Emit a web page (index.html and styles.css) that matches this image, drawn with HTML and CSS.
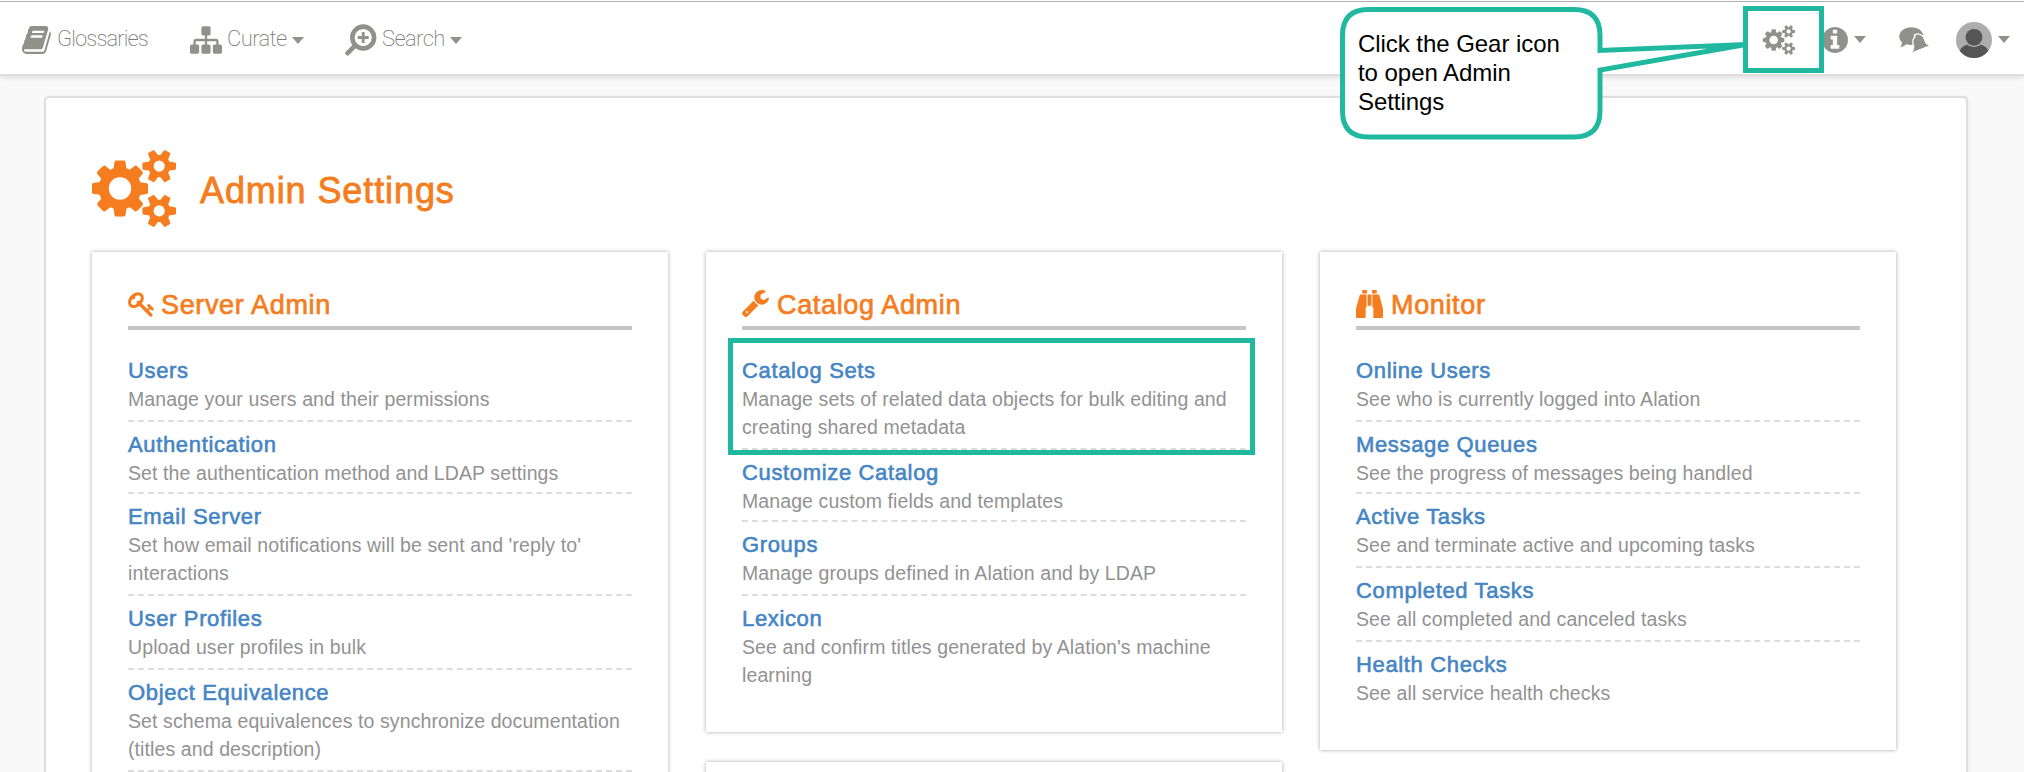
FILE: index.html
```html
<!DOCTYPE html>
<html lang="en">
<head>
<meta charset="utf-8">
<title>Admin Settings</title>
<link rel="stylesheet" href="styles.css">
</head>
<body>
<svg class="defs" width="0" height="0">
  <symbol id="cogs" viewBox="0 0 1920 1792"><path d="M896 896q0-106-75-181t-181-75-181 75-75 181 75 181 181 75 181-75 75-181zm768 512q0-52-38-90t-90-38-90 38-38 90q0 53 37.5 90.5t90.5 37.5 90.5-37.5 37.5-90.5zm0-1024q0-52-38-90t-90-38-90 38-38 90q0 53 37.5 90.5t90.5 37.5 90.5-37.5 37.5-90.5zm-384 421v185q0 10-7 19.5t-16 10.5l-155 24q-11 35-32 76 34 48 90 115 7 11 7 20 0 12-7 19-23 30-82.5 89.5t-78.5 59.5q-11 0-21-7l-115-90q-37 19-77 31-11 108-23 155-7 24-30 24h-186q-11 0-20-7.5t-10-17.5l-23-153q-34-10-75-31l-118 89q-7 7-20 7-11 0-21-8-144-133-144-160 0-9 7-19 10-14 41-53t47-61q-23-44-35-82l-152-24q-10-1-17-9.5t-7-19.5v-185q0-10 7-19.5t16-10.5l155-24q11-35 32-76-34-48-90-115-7-11-7-20 0-12 7-20 22-30 82-89t79-59q11 0 21 7l115 90q34-18 77-32 11-108 23-154 7-24 30-24h186q11 0 20 7.5t10 17.5l23 153q34 10 75 31l118-89q8-7 20-7 11 0 21 8 144 133 144 160 0 8-7 19-12 16-42 54t-45 60q23 48 34 82l152 23q10 2 17 10.5t7 19.5zm640 533v140q0 16-149 31-12 27-30 52 51 113 51 138 0 4-4 7-122 71-124 71-8 0-46-47t-52-68q-20 2-30 2t-30-2q-14 21-52 68t-46 47q-2 0-124-71-4-3-4-7 0-25 51-138-18-25-30-52-149-15-149-31v-140q0-16 149-31 13-29 30-52-51-113-51-138 0-4 4-7 4-2 35-20t59-34 30-16q8 0 46 46.5t52 67.5q20-2 30-2t30 2q51-71 92-112l6-2q4 0 124 70 4 3 4 7 0 25-51 138 17 23 30 52 149 15 149 31zm0-1024v140q0 16-149 31-12 27-30 52 51 113 51 138 0 4-4 7-122 71-124 71-8 0-46-47t-52-68q-20 2-30 2t-30-2q-14 21-52 68t-46 47q-2 0-124-71-4-3-4-7 0-25 51-138-18-25-30-52-149-15-149-31v-140q0-16 149-31 13-29 30-52-51-113-51-138 0-4 4-7 4-2 35-20t59-34 30-16q8 0 46 46.5t52 67.5q20-2 30-2t30 2q51-71 92-112l6-2q4 0 124 70 4 3 4 7 0 25-51 138 17 23 30 52 149 15 149 31z"/></symbol>
</svg>

<header class="topbar">
  <nav class="menu">
    <a class="menu-item glossaries">
      <svg class="ico-book" viewBox="0 128 1664 1536" preserveAspectRatio="none"><path d="M1639 478q40 57 18 129l-275 906q-19 64-76.5 107.5t-122.5 43.5h-923q-77 0-148.5-53.5t-99.5-131.5q-24-67-2-127 0-4 3-27t4-37q1-8-3-21.5t-3-19.5q2-11 8-21t16.5-23.5 16.5-23.5q23-38 45-91.5t30-91.5q3-10 .5-30t-.5-28q3-11 17-28t17-23q21-36 42-92t25-90q1-9-2.5-32t.5-28q4-13 22-30.5t22-22.5q19-26 42.5-84.5t27.5-96.5q1-8-3-25.5t-2-26.5q2-8 9-18t18-23 17-21q8-12 16.5-30.5t15-35 16-36 19.5-32 26.5-23.5 36-11.5 47.5 5.5l-1 3q38-9 51-9h761q74 0 114 56t18 130l-274 906q-36 119-71.5 153.5t-128.5 34.5h-869q-27 0-38 15-11 16-1 43 24 70 144 70h923q29 0 56-15.5t35-41.5l300-987q7-22 5-57 38 15 59 43zm-1064 2q-4 13 2 22.5t20 9.5h608q13 0 25.5-9.5t16.5-22.5l21-64q4-13-2-22.5t-20-9.5h-608q-13 0-25.5 9.5t-16.5 22.5zm-83 256q-4 13 2 22.5t20 9.5h608q13 0 25.5-9.5t16.5-22.5l21-64q4-13-2-22.5t-20-9.5h-608q-13 0-25.5 9.5t-16.5 22.5z"/></svg>
      <span>Glossaries</span>
    </a>
    <a class="menu-item curate">
      <svg class="ico-sitemap" viewBox="0 128 1792 1536"><path d="M1792 1248v320q0 40-28 68t-68 28h-320q-40 0-68-28t-28-68v-320q0-40 28-68t68-28h96v-192h-512v192h96q40 0 68 28t28 68v320q0 40-28 68t-68 28h-320q-40 0-68-28t-28-68v-320q0-40 28-68t68-28h96v-192h-512v192h96q40 0 68 28t28 68v320q0 40-28 68t-68 28h-320q-40 0-68-28t-28-68v-320q0-40 28-68t68-28h96v-192q0-52 38-90t90-38h512v-192h-96q-40 0-68-28t-28-68v-320q0-40 28-68t68-28h320q40 0 68 28t28 68v320q0 40-28 68t-68 28h-96v192h512q52 0 90 38t38 90v192h96q40 0 68 28t28 68z"/></svg>
      <span>Curate</span><i class="caret"></i>
    </a>
    <a class="menu-item search">
      <svg class="ico-search" viewBox="0 0 32 32"><circle cx="18.2" cy="13.5" r="10.9" fill="none" stroke="currentColor" stroke-width="4.6"/><path d="M18.2 8v11M12.7 13.5h11" stroke="currentColor" stroke-width="2.8"/><path d="M10.4 21.4L2.6 29.2" stroke="currentColor" stroke-width="4.6" stroke-linecap="round"/></svg>
      <span>Search</span><i class="caret"></i>
    </a>
  </nav>
  <div class="tools">
    <svg class="ico-cogs" preserveAspectRatio="none"><use href="#cogs"/></svg>
    <svg class="ico-info" viewBox="128 128 1536 1536"><path d="M1152 1376v-160q0-14-9-23t-23-9h-96v-512q0-14-9-23t-23-9h-320q-14 0-23 9t-9 23v160q0 14 9 23t23 9h96v320h-96q-14 0-23 9t-9 23v160q0 14 9 23t23 9h448q14 0 23-9t9-23zm-128-896v-160q0-14-9-23t-23-9h-192q-14 0-23 9t-9 23v160q0 14 9 23t23 9h192q14 0 23-9t9-23zm640 416q0 209-103 385.5t-279.5 279.5-385.5 103-385.5-103-279.5-279.5-103-385.5 103-385.5 279.5-279.5 385.5-103 385.5 103 279.5 279.5 103 385.5z"/></svg>
    <i class="caret"></i>
    <svg class="ico-chat" viewBox="0 0 30 26"><path d="M12.300.2C18.800.2 24.400 4 24.400 9.500C24.400 14.500 19 18 12.300 18C10.500 18 8.900 17.800 7.400 17.300C5.500 18.900 3.500 19.900 1 20.100C2.400 18.500 3 17 3 15.200C1.200 13.600.2 11.700.2 9.500C.2 4.300 5.700.2 12.300.2z"/><path class="bell" d="M16.200 8.400L18.600 7.600C22.500 8 24.400 10.200 25.300 13.500C26.200 16.600 27.500 17.800 30 18.500L13.600 25C15.600 22 15.500 19.800 14.800 17C14 14 14.300 11.800 16.800 10z"/><path class="bell-gap" d="M19 23.700L25 21.300"/></svg>
    <svg class="ico-user" viewBox="0 0 36 36"><circle cx="18" cy="18" r="18" fill="#adadad"/><path d="M3.800 29.100C5 25.300 8 23.300 11.500 22.800C15 25.600 21 25.600 24.500 22.800C28 23.300 31 25.300 32.200 29.100A18 18 0 0 1 3.800 29.100z" fill="#555"/><circle cx="18" cy="15.300" r="8.400" fill="#555"/></svg>
    <i class="caret"></i>
  </div>
</header>

<main class="panel">
  <h1 class="page-title"><svg class="title-cogs" preserveAspectRatio="none"><use href="#cogs"/></svg><span>Admin Settings</span></h1>
  <div class="columns">
    <div class="column">
      <section class="card">
        <h2 class="card-title server"><svg class="ico-key" viewBox="0 128 1683 1592"><path d="M832 512q0-80-56-136t-136-56-136 56-56 136q0 42 19 83-41-19-83-19-80 0-136 56t-56 136 56 136 136 56 136-56 56-136q0-42-19-83 41 19 83 19 80 0 136-56t56-136zm851 704q0 17-49 66t-66 49q-9 0-28.500-16t-36.500-33-38.500-40-24.500-26l-96 96 220 220q28 28 28 68 0 42-39 81t-81 39q-40 0-68-28l-671-671q-176 131-365 131-163 0-265.500-102.500t-102.500-265.500q0-160 95-313t248-248 313-95q163 0 265.500 102.500t102.500 265.500q0 189-131 365l355 355 96-96q-3-3-26-24.500t-40-38.500-33-36.500-16-28.500q0-17 49-66t66-49q13 0 23 10 6 6 46 44.500t82 79.500 86.500 86 73 78 28.500 41z"/></svg><span>Server Admin</span></h2>
        <ul class="links">
          <li><a>Users</a><p>Manage your users and their permissions</p></li>
          <li><a>Authentication</a><p>Set the authentication method and LDAP settings</p></li>
          <li><a>Email Server</a><p>Set how email notifications will be sent and 'reply to'<br>interactions</p></li>
          <li><a>User Profiles</a><p>Upload user profiles in bulk</p></li>
          <li><a>Object Equivalence</a><p>Set schema equivalences to synchronize documentation<br>(titles and description)</p></li>
          <li></li>
        </ul>
      </section>
    </div>
    <div class="column">
      <section class="card">
        <h2 class="card-title catalog"><svg class="ico-wrench" viewBox="85 128 1641 1643"><path d="M448 1472q0-26-19-45t-45-19-45 19-19 45 19 45 45 19 45-19 19-45zm644-420l-682 682q-37 37-90 37-52 0-91-37l-106-108q-38-36-38-90 0-53 38-91l681-681q39 98 114.500 173.500t173.500 114.500zm634-435q0 39-23 106-47 134-164.500 217.500t-258.500 83.500q-185 0-316.500-131.500t-131.500-316.500 131.500-316.500 316.500-131.500q58 0 121.500 16.500t107.500 46.500q16 11 16 28t-16 28l-293 169v224l193 107q5-3 79-48.500t135.500-81 70.500-35.500q15 0 23.500 10t8.500 25z"/></svg><span>Catalog Admin</span></h2>
        <ul class="links">
          <li class="highlighted"><a>Catalog Sets</a><p>Manage sets of related data objects for bulk editing and<br>creating shared metadata</p></li>
          <li><a>Customize Catalog</a><p>Manage custom fields and templates</p></li>
          <li><a>Groups</a><p>Manage groups defined in Alation and by LDAP</p></li>
          <li><a>Lexicon</a><p>See and confirm titles generated by Alation's machine<br>learning</p></li>
        </ul>
      </section>
      <section class="card"></section>
    </div>
    <div class="column">
      <section class="card">
        <h2 class="card-title monitor"><svg class="ico-binoculars" viewBox="0 32 1792 1760" preserveAspectRatio="none"><path d="M704 320v768q0 26-19 45t-45 19v576q0 26-19 45t-45 19h-512q-26 0-45-19t-19-45v-512l249-873q7-23 31-23h424zm320 0v704h-256v-704h256zm768 896v512q0 26-19 45t-45 19h-512q-26 0-45-19t-19-45v-576q-26 0-45-19t-19-45v-768h424q24 0 31 23zm-1056-1152v192h-320v-192q0-14 9-23t23-9h256q14 0 23 9t9 23zm640 0v192h-320v-192q0-14 9-23t23-9h256q14 0 23 9t9 23z"/></svg><span>Monitor</span></h2>
        <ul class="links">
          <li><a>Online Users</a><p>See who is currently logged into Alation</p></li>
          <li><a>Message Queues</a><p>See the progress of messages being handled</p></li>
          <li><a>Active Tasks</a><p>See and terminate active and upcoming tasks</p></li>
          <li><a>Completed Tasks</a><p>See all completed and canceled tasks</p></li>
          <li><a>Health Checks</a><p>See all service health checks</p></li>
        </ul>
      </section>
    </div>
  </div>
</main>

<div class="callout">
  <svg class="callout-shape" viewBox="0 0 410 134"><path d="M28.500 2.500H234Q260 2.500 260 28.500V43.500L406 37.500L260 63V104Q260 130 234 130H28.500Q2.500 130 2.500 104V28.500Q2.500 2.500 28.500 2.500z"/></svg>
  <p>Click the Gear icon<br>to open Admin<br>Settings</p>
</div>
<div class="gear-frame"></div>
</body>
</html>
```
FILE: styles.css
```css
*, *::after { box-sizing: border-box; }
body {
  margin: 0;
  height: 772px;
  overflow: hidden;
  background: #f9f9f9;
  font-family: "Liberation Sans", Arial, sans-serif;
  display: flex;
  flex-direction: column;
}
svg { fill: currentColor; flex: none; display: block; }
.defs { position: absolute; }
h1, h2, p, ul { margin: 0; padding: 0; font-weight: 400; }

.topbar {
  flex: none;
  height: 76px;
  margin-bottom: 20px;
  background: linear-gradient(#fff 1px, #b0b0b0 1px, #b0b0b0 2px, #fff 2px);
  border-bottom: 2px solid #dedede;
  box-shadow: 0 2px 4px rgba(0, 0, 0, .1);
  display: flex;
  justify-content: space-between;
  color: #90918b;
}
.menu, .tools, .menu-item { display: flex; align-items: center; }
.menu { padding: 6px 0 0 22px; font: 200 22px/30px Roboto, sans-serif; letter-spacing: -.6px; }
.menu-item span { margin-top: -2px; color: #7c7d77; }
.glossaries { width: 168px; letter-spacing: -.9px; }
.curate { width: 155px; }
.ico-book { width: 29px; height: 28px; margin-right: 6px; }
.ico-sitemap { width: 32px; height: 28px; margin-right: 5px; }
.ico-search { width: 32px; height: 32px; margin-right: 5px; }
.caret { border: 6px solid transparent; border-top: 7px solid #90918b; border-bottom: 0; }
.menu .caret { margin-left: 5px; }
.tools { padding: 5px 14px 0 0; }
.ico-cogs { width: 32px; height: 30px; margin-right: 27px; }
.ico-info { width: 26px; height: 26px; margin-right: 6px; }
.ico-chat { width: 30px; height: 26px; margin: 0 27px 0 33px; overflow: visible; }
.bell { stroke: #fff; stroke-width: 2.6px; paint-order: stroke; }
.bell-gap { stroke: #fff; stroke-width: .8px; }
.ico-user { width: 36px; height: 36px; margin-right: 6px; }

.panel {
  flex: 1;
  min-height: 0;
  overflow: hidden;
  width: 1924px;
  margin-left: 44px;
  padding: 51px 46px 0;
  background: #fff;
  border: 2px solid #dedede;
  border-bottom: 0;
  border-radius: 5px 5px 0 0;
  box-shadow: 1px 1px 4px rgba(0, 0, 0, .06);
}
.page-title {
  display: flex;
  height: 103px;
  color: #f57d20;
  font-size: 36px;
  line-height: 83px;
  letter-spacing: .9px;
  -webkit-text-stroke: .8px #f57d20;
}
.title-cogs { width: 84px; height: 79px; margin-right: 24px; stroke: none; }
.columns { display: grid; grid-template-columns: repeat(3, 576px); gap: 38px; align-items: start; }
.column { display: flex; flex-direction: column; gap: 30px; }
.card { min-height: 200px; padding: 36px; box-shadow: 0 0 4px rgba(0, 0, 0, .35); }
.card-title {
  display: flex;
  align-items: flex-start;
  height: 42px;
  border-bottom: 4px solid #c6c6c6;
  color: #f57d20;
  font-size: 27px;
  line-height: 35px;
  letter-spacing: .65px;
  -webkit-text-stroke: .7px #f57d20;
}
.card-title svg { stroke: none; }
.ico-key { width: 26px; height: 25px; margin: 4px 7px 0 0; }
.ico-wrench { width: 27px; height: 27px; margin: 2px 8px 0 0; }
.ico-binoculars { width: 27px; height: 28px; margin: 2px 8px 0 0; }
.links { padding-top: 18px; list-style: none; }
.links li { padding: 9px 0 7px; border-bottom: 2px dashed #dcdcdc; }
.links li:nth-child(2) { padding-bottom: 5px; }
.links li:last-child { border-bottom: 0; }
.links a {
  display: block;
  color: #4585c4;
  font-size: 22px;
  line-height: 28px;
  letter-spacing: .65px;
  -webkit-text-stroke: .6px #4585c4;
}
.links p { color: #929292; font-size: 19.5px; line-height: 28px; letter-spacing: .1px; white-space: nowrap; }
.highlighted { position: relative; }
.highlighted::after {
  content: "";
  position: absolute;
  left: -14px;
  top: -10px;
  width: 527px;
  height: 117px;
  border: 5px solid #20b9a0;
}

.callout { position: absolute; left: 1340px; top: 7px; }
.callout-shape { width: 410px; height: 134px; fill: #fff; stroke: #20b9a0; stroke-width: 5px; }
.callout p { position: absolute; left: 18px; top: 22px; font-size: 24px; line-height: 29px; letter-spacing: -.05px; color: #000; white-space: nowrap; }
.gear-frame { position: absolute; left: 1743px; top: 6px; width: 81px; height: 67px; border: 5px solid #20b9a0; }
```
